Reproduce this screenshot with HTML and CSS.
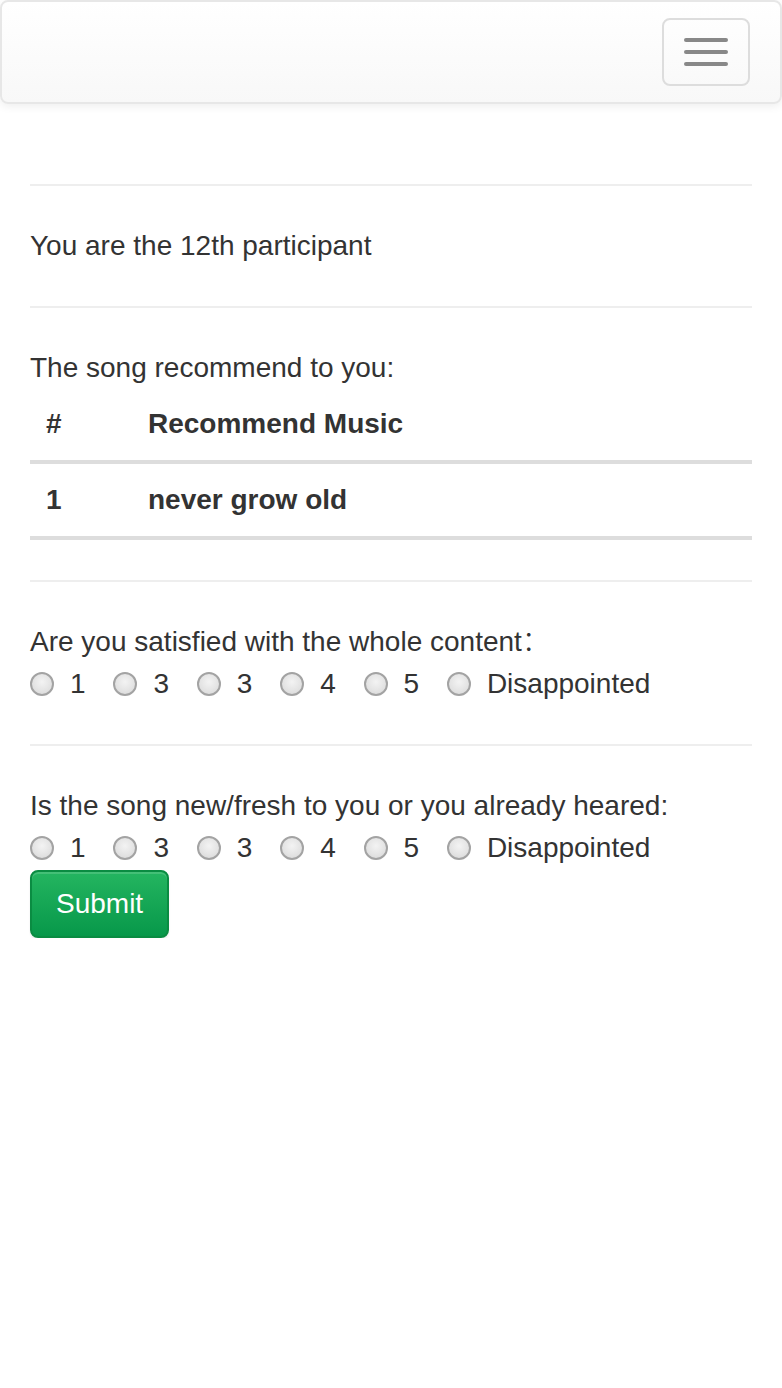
FILE: index.html
```html
<!DOCTYPE html>
<html lang="en">
<head>
<meta charset="utf-8">
<title>Survey</title>
<link rel="stylesheet" href="styles.css">
</head>
<body>
<nav class="navbar">
  <button class="navbar-toggle" type="button" aria-label="Toggle navigation">
    <span class="icon-bar"></span>
    <span class="icon-bar"></span>
    <span class="icon-bar"></span>
  </button>
</nav>
<main class="container">
  <hr class="divider">
  <div class="line">You are the 12th participant</div>
  <hr class="divider">
  <div class="line">The song recommend to you:</div>
  <table class="table">
    <thead>
      <tr><th class="col-num">#</th><th>Recommend Music</th></tr>
    </thead>
    <tbody>
      <tr><th class="col-num">1</th><th>never grow old</th></tr>
    </tbody>
  </table>
  <hr class="divider">
  <form class="survey">
    <div class="line">Are you satisfied with the whole content<span class="cjk">&#xFF1A;</span></div>
    <div class="radios">
      <label class="radio-inline"><input type="radio" name="q1" class="radio-input"><span>1</span></label>
      <label class="radio-inline"><input type="radio" name="q1" class="radio-input"><span>3</span></label>
      <label class="radio-inline"><input type="radio" name="q1" class="radio-input"><span>3</span></label>
      <label class="radio-inline"><input type="radio" name="q1" class="radio-input"><span>4</span></label>
      <label class="radio-inline"><input type="radio" name="q1" class="radio-input"><span>5</span></label>
      <label class="radio-inline"><input type="radio" name="q1" class="radio-input"><span>Disappointed</span></label>
    </div>
    <hr class="divider">
    <div class="line">Is the song new/fresh to you or you already heared:</div>
    <div class="radios">
      <label class="radio-inline"><input type="radio" name="q2" class="radio-input"><span>1</span></label>
      <label class="radio-inline"><input type="radio" name="q2" class="radio-input"><span>3</span></label>
      <label class="radio-inline"><input type="radio" name="q2" class="radio-input"><span>3</span></label>
      <label class="radio-inline"><input type="radio" name="q2" class="radio-input"><span>4</span></label>
      <label class="radio-inline"><input type="radio" name="q2" class="radio-input"><span>5</span></label>
      <label class="radio-inline"><input type="radio" name="q2" class="radio-input"><span>Disappointed</span></label>
    </div>
    <button type="button" class="btn-success">Submit</button>
  </form>
</main>
</body>
</html>
```
FILE: styles.css
```css
* {
  box-sizing: border-box;
}

html, body {
  margin: 0;
  padding: 0;
  background: #fff;
}

body {
  font-family: "Liberation Sans", Arial, "Noto Sans CJK SC", sans-serif;
  font-size: 28px;
  line-height: 40px;
  color: #333;
}

.cjk {
  font-family: "Noto Sans CJK SC", sans-serif;
  font-weight: 300;
  line-height: 0;
  letter-spacing: -8px;
}

.navbar {
  display: flex;
  justify-content: flex-end;
  align-items: flex-start;
  min-height: 104px;
  margin-bottom: 40px;
  border: 2px solid #e7e7e7;
  border-radius: 8px;
  background: linear-gradient(to bottom, #ffffff 0%, #f8f8f8 100%);
  box-shadow: inset 0 2px 0 rgba(255, 255, 255, 0.15), 0 2px 10px rgba(0, 0, 0, 0.075);
}

.navbar-toggle {
  display: flex;
  flex-direction: column;
  gap: 8px;
  margin: 16px 30px 0 0;
  padding: 18px 20px;
  border: 2px solid #ddd;
  border-radius: 8px;
  background: transparent;
  cursor: pointer;
}

.icon-bar {
  display: block;
  width: 44px;
  height: 4px;
  border-radius: 2px;
  background: #888;
}

.container {
  display: flow-root;
  padding: 0 30px;
}

.divider {
  margin: 40px 0;
  border: 0;
  border-top: 2px solid #eee;
  height: 0;
}

.line {
  height: 40px;
}

.table {
  width: 100%;
  border-collapse: collapse;
  margin-bottom: 40px;
}

.table th {
  padding: 16px;
  text-align: left;
  font-weight: bold;
  line-height: 40px;
  vertical-align: bottom;
}

.table thead th {
  border-bottom: 4px solid #ddd;
}

.table tbody th {
  border-bottom: 4px solid #ddd;
  vertical-align: top;
}

.table .col-num {
  width: 102px;
}

.survey {
  margin: 0;
}

.radios {
  display: flex;
  gap: 27.8px;
  height: 42px;
  padding-top: 2px;
}

.radio-inline {
  display: flex;
  align-items: flex-start;
  gap: 16px;
  cursor: pointer;
}

.radio-input {
  appearance: none;
  -webkit-appearance: none;
  flex: 0 0 auto;
  width: 24px;
  height: 24px;
  margin: 8px 0 0 0;
  border: 2px solid #a3a3a3;
  border-radius: 50%;
  background: radial-gradient(circle at 50% 40%, #f3f3f3 0%, #e4e4e4 55%, #d6d6d6 100%);
}

.btn-success {
  display: inline-block;
  margin-top: 2px;
  padding: 12px 24px;
  font-family: inherit;
  font-size: 28px;
  line-height: 40px;
  color: #fff;
  border: 2px solid #0a8c42;
  border-radius: 8px;
  background: linear-gradient(to bottom, #24b560 0%, #07984a 100%);
  box-shadow: inset 0 2px 0 rgba(255, 255, 255, 0.15), 0 2px 2px rgba(0, 0, 0, 0.075);
  cursor: pointer;
}
```
